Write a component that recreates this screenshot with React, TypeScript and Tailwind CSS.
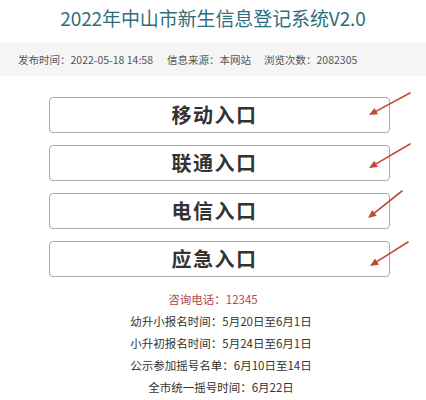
import React from 'react';

const entries = ['移动入口', '联通入口', '电信入口', '应急入口'];

// arrows drawn over the page: [startX, startY, tipX, tipY]
const arrows: [number, number, number, number][] = [
  [410, 93, 369, 115],
  [410, 144, 369, 168],
  [402, 191, 368, 218],
  [408, 242, 370, 266],
];

const infoLines = [
  '幼升小报名时间：5月20日至6月1日',
  '小升初报名时间：5月24日至6月1日',
  '公示参加摇号名单：6月10日至14日',
  '全市统一摇号时间：6月22日',
];

function Arrow({ x1, y1, x2, y2 }: { x1: number; y1: number; x2: number; y2: number }) {
  const ang = Math.atan2(y2 - y1, x2 - x1);
  const len = 9;
  const spread = 0.42;
  const ax = x2 - len * Math.cos(ang - spread);
  const ay = y2 - len * Math.sin(ang - spread);
  const bx = x2 - len * Math.cos(ang + spread);
  const by = y2 - len * Math.sin(ang + spread);
  const mx = x2 - len * 0.8 * Math.cos(ang);
  const my = y2 - len * 0.8 * Math.sin(ang);
  return (
    <g>
      <line x1={x1} y1={y1} x2={mx} y2={my} stroke="#c24a33" strokeWidth={1.6} strokeLinecap="round" />
      <polygon points={`${x2},${y2} ${ax},${ay} ${bx},${by}`} fill="#c24a33" />
    </g>
  );
}

export default function App() {
  return (
    <div
      className="relative w-[426px] h-[400px] bg-white overflow-hidden"
      style={{ fontFamily: '"Noto Sans CJK SC", "Noto Sans", sans-serif' }}
    >
      <h1 className="pt-[5px] h-[43px] text-center text-[19px] leading-[26px] text-[#2f6f7c] tracking-[-0.1px]">
        2022年中山市新生信息登记系统V2.0
      </h1>

      <div className="h-[33px] bg-[#f5f5f5] flex items-center pl-[18px] text-[10.5px] text-[#555]">
        <span>发布时间：2022-05-18 14:58</span>
        <span className="ml-[14px]">信息来源：本网站</span>
        <span className="ml-[13px]">浏览次数：2082305</span>
      </div>

      <div className="flex flex-col gap-[12px] pt-[21px] pl-[49px] w-[390px]">
        {entries.map((t) => (
          <div
            key={t}
            className="h-[36px] border border-[#a9a9a9] rounded-[4px] flex items-center justify-center pr-[10px] text-[20px] font-bold text-[#333] tracking-[1.5px]"
          >
            {t}
          </div>
        ))}
      </div>

      <div className="flex flex-col items-center pt-[11px] pl-[16px] text-[11.5px] leading-[22px] text-[#333]">
        <div className="text-[#b5464c] -ml-[16px]">咨询电话：12345</div>
        {infoLines.map((l) => (
          <div key={l}>{l}</div>
        ))}
      </div>

      <svg className="absolute inset-0 pointer-events-none" width={426} height={400}>
        {arrows.map(([a, b, c, d], i) => (
          <Arrow key={i} x1={a} y1={b} x2={c} y2={d} />
        ))}
      </svg>
    </div>
  );
}
